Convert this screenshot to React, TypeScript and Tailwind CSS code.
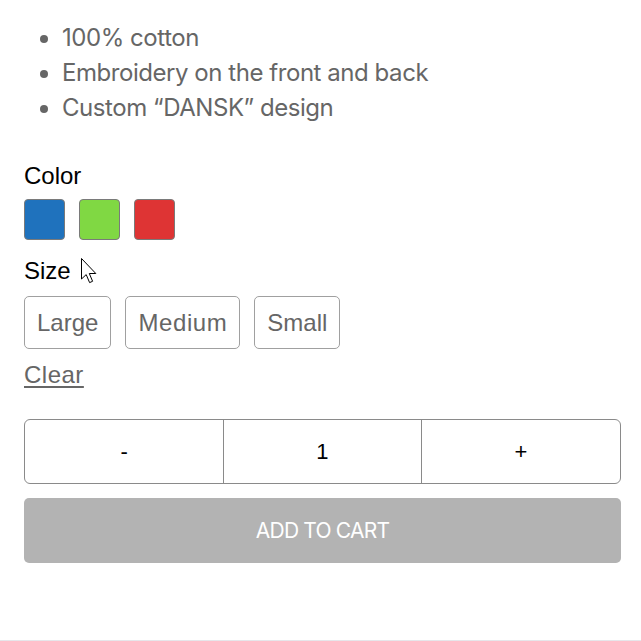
import { useState, type FC } from "react";

const features = ["100% cotton", "Embroidery on the front and back", "Custom “DANSK” design"];
const colors = ["#1f72bd", "#80d843", "#de3434"];
const sizes = ["Large", "Medium", "Small"];

const Cursor: FC = () => (
  <svg
    className="absolute left-[81px] top-[258px]"
    width="20"
    height="30"
    viewBox="0 0 20 30"
  >
    <path
      d="M0.5 0.5 L0.5 21 L5.2 16.6 L8.6 24.6 L11.6 23.3 L8.3 15.5 L14.8 15.5 Z"
      fill="#fff"
      stroke="#000"
      strokeWidth="1"
      strokeLinejoin="round"
    />
  </svg>
);

const App: FC = () => {
  const [qty, setQty] = useState<number>(1);
  const [size, setSize] = useState<string | null>(null);

  return (
    <div className="relative h-[641px] w-full border-b border-[#e6e6ea] bg-white pl-6 pr-5 pt-5 font-['Liberation_Sans',Arial,sans-serif]">
      <ul className="list-disc pl-[38px] font-['Inter',sans-serif] text-[24px] leading-[35px] tracking-[-0.45px] text-[#666] marker:text-[#666]">
        {features.map((f) => (
          <li key={f}>{f}</li>
        ))}
      </ul>

      <div className="mt-[37px] text-[24px] leading-[28px] text-black">Color</div>
      <div className="mt-[9px] flex gap-[14px]">
        {colors.map((c) => (
          <button
            key={c}
            className="h-[41px] w-[41px] rounded-[4px] border border-[#7a7a7a]"
            style={{ backgroundColor: c }}
          />
        ))}
      </div>

      <div className="mt-[17px] text-[24px] leading-[28px] text-black">Size</div>
      <div className="mt-[11px] flex gap-[14px]">
        {sizes.map((s) => (
          <button
            key={s}
            onClick={() => setSize(s)}
            className={`h-[53px] rounded-[5px] border px-3 text-[24px] text-[#666] ${
              size === s ? "border-black" : "border-[#a0a0a0]"
            } ${s === "Medium" ? "tracking-[0.6px]" : ""}`}
          >
            {s}
          </button>
        ))}
      </div>
      <button
        onClick={() => setSize(null)}
        className="mt-[12px] block text-[24px] leading-[28px] tracking-[0.5px] text-[#666] underline underline-offset-[3px]"
      >
        Clear
      </button>

      <div className="mt-[30px] grid h-[65px] grid-cols-3 rounded-[6px] border border-[#8a8a8a] text-[22px] text-black">
        <button onClick={() => setQty(Math.max(1, qty - 1))}>-</button>
        <div className="flex items-center justify-center border-x border-[#8a8a8a]">{qty}</div>
        <button onClick={() => setQty(qty + 1)}>+</button>
      </div>

      <button
        disabled
        className="mt-[14px] flex h-[65px] w-full items-center justify-center rounded-[5px] bg-[#b3b3b3] font-['Inter',sans-serif] text-[21px] tracking-[-0.8px] text-white"
      >
        ADD TO CART
      </button>

      <Cursor />
    </div>
  );
};

export default App;
